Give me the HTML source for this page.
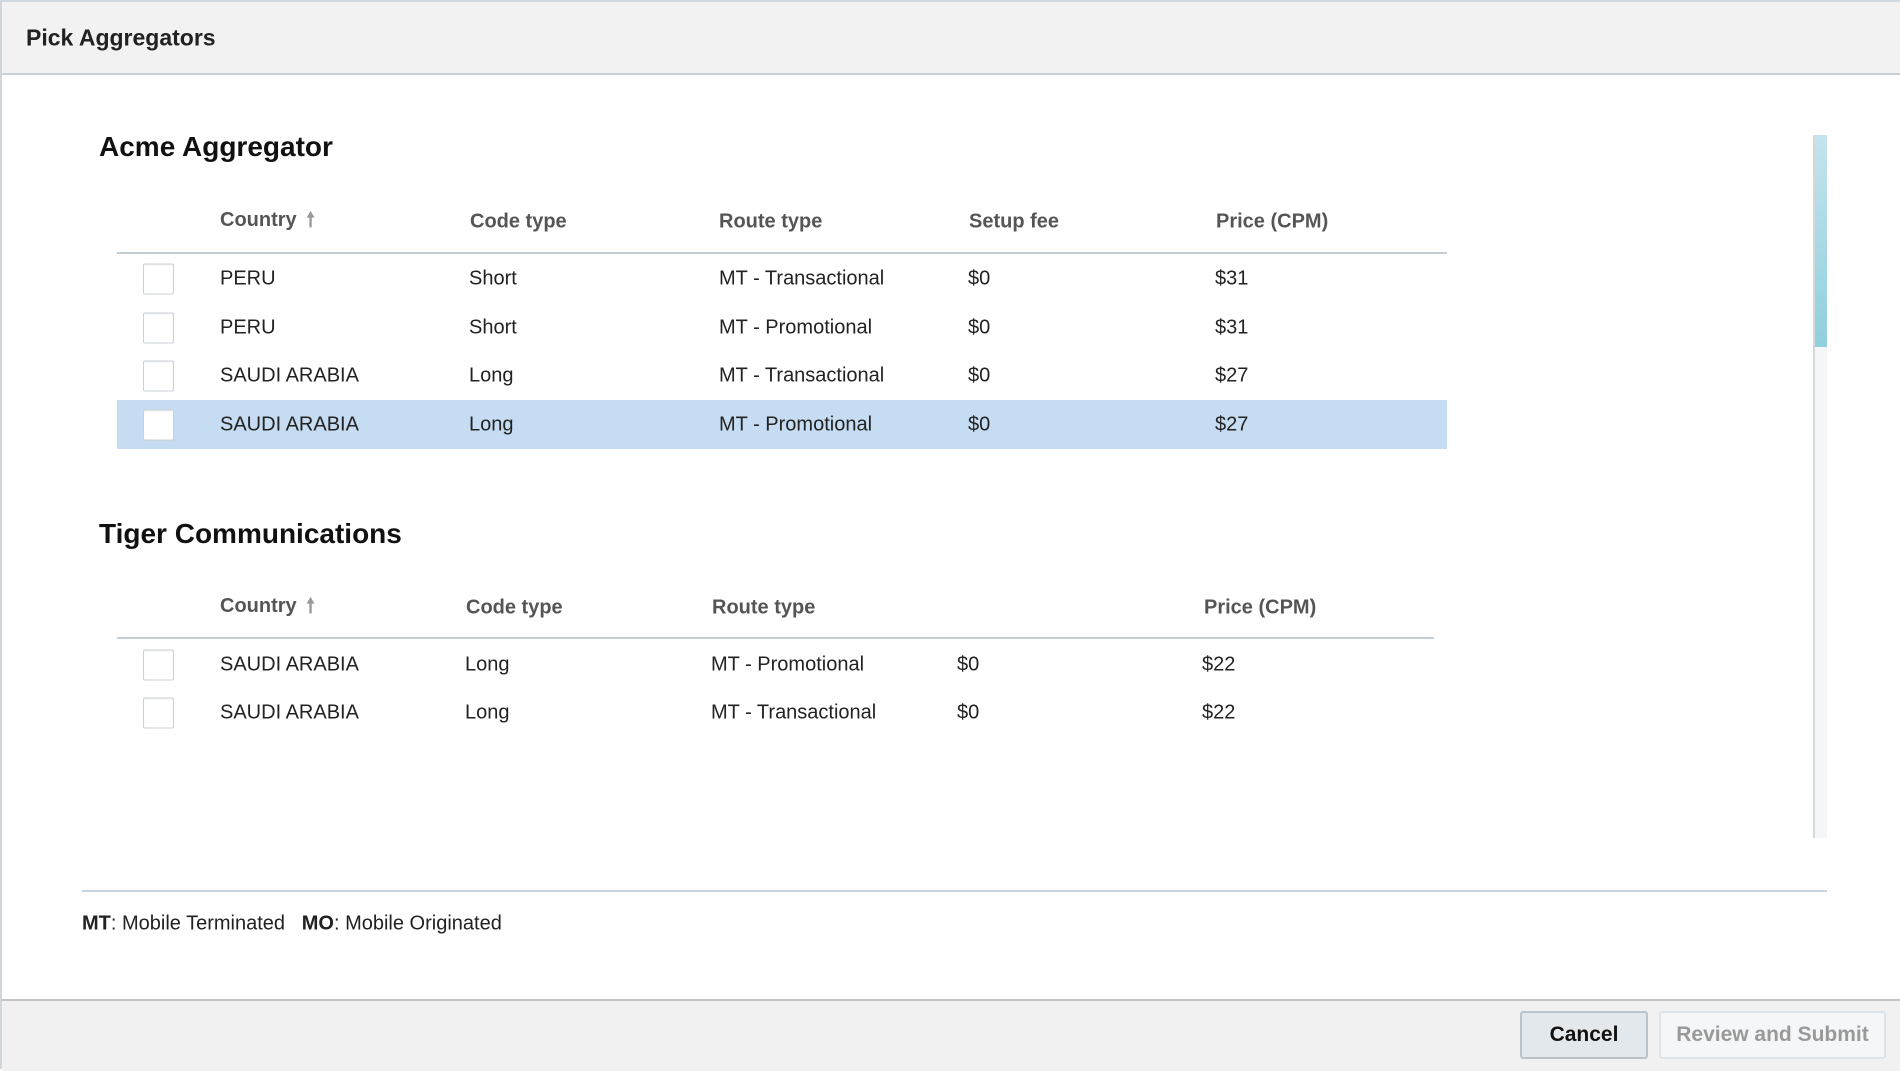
<!DOCTYPE html>
<html><head><style>
*{margin:0;padding:0;box-sizing:border-box}
body{width:1900px;height:1069px;position:relative;background:#fff;font-family:"Liberation Sans",Arial,sans-serif;color:#222;overflow:hidden;border-left:2px solid #d0d6dc;border-top:2px solid #d0d8e0}
.a{position:absolute;white-space:nowrap}
.hdr{position:absolute;left:0;top:0;width:1900px;height:73px;background:#f2f2f2;border-bottom:2px solid #c8cfd6}
.th{position:absolute;font-size:20px;font-weight:bold;color:#555;transform:translateY(-50%)}
.td{position:absolute;font-size:20px;color:#222;transform:translateY(-50%)}
.cb{position:absolute;width:31px;height:31px;border:1px solid #c9d0d6;background:#fff;border-radius:2px;transform:translateY(-50%);box-shadow:inset 0 1px 1px rgba(0,0,0,.05)}
.line{position:absolute;height:2px;background:#c4ccd4}
.arrow{display:inline-block;color:#999;font-size:20px;margin-left:4px}
</style></head><body>
<div class="hdr"></div>
<div class="a" style="left:24px;top:36px;transform:translateY(-50%);font-size:23px;font-weight:bold;color:#222">Pick Aggregators</div>

<div class="a" style="left:97px;top:145px;transform:translateY(-50%);font-size:28px;font-weight:bold;color:#111">Acme Aggregator</div>
<div class="th" style="left:218px;top:220px">Country <span class="arrow">🠕</span></div>
<div class="th" style="left:468px;top:220px">Code type</div>
<div class="th" style="left:717px;top:220px">Route type</div>
<div class="th" style="left:967px;top:220px">Setup fee</div>
<div class="th" style="left:1214px;top:220px">Price (CPM)</div>
<div class="line" style="left:115px;top:250px;width:1330px"></div>
<div style="position:absolute;left:115px;top:398px;width:1330px;height:49px;background:#c5dcf2"></div>

<div class="cb" style="left:141px;top:277px"></div><div class="td" style="left:218px;top:277px">PERU</div><div class="td" style="left:467px;top:277px">Short</div><div class="td" style="left:717px;top:277px">MT - Transactional</div><div class="td" style="left:966px;top:277px">$0</div><div class="td" style="left:1213px;top:277px">$31</div>
<div class="cb" style="left:141px;top:326px"></div><div class="td" style="left:218px;top:326px">PERU</div><div class="td" style="left:467px;top:326px">Short</div><div class="td" style="left:717px;top:326px">MT - Promotional</div><div class="td" style="left:966px;top:326px">$0</div><div class="td" style="left:1213px;top:326px">$31</div>
<div class="cb" style="left:141px;top:374px"></div><div class="td" style="left:218px;top:374px">SAUDI ARABIA</div><div class="td" style="left:467px;top:374px">Long</div><div class="td" style="left:717px;top:374px">MT - Transactional</div><div class="td" style="left:966px;top:374px">$0</div><div class="td" style="left:1213px;top:374px">$27</div>
<div class="cb" style="left:141px;top:423px"></div><div class="td" style="left:218px;top:423px">SAUDI ARABIA</div><div class="td" style="left:467px;top:423px">Long</div><div class="td" style="left:717px;top:423px">MT - Promotional</div><div class="td" style="left:966px;top:423px">$0</div><div class="td" style="left:1213px;top:423px">$27</div>

<div class="a" style="left:97px;top:532px;transform:translateY(-50%);font-size:28px;font-weight:bold;color:#111">Tiger Communications</div>
<div class="th" style="left:218px;top:606px">Country <span class="arrow">🠕</span></div>
<div class="th" style="left:464px;top:606px">Code type</div>
<div class="th" style="left:710px;top:606px">Route type</div>
<div class="th" style="left:1202px;top:606px">Price (CPM)</div>
<div class="line" style="left:115px;top:635px;width:1317px"></div>
<div class="cb" style="left:141px;top:663px"></div><div class="td" style="left:218px;top:663px">SAUDI ARABIA</div><div class="td" style="left:463px;top:663px">Long</div><div class="td" style="left:709px;top:663px">MT - Promotional</div><div class="td" style="left:955px;top:663px">$0</div><div class="td" style="left:1200px;top:663px">$22</div>
<div class="cb" style="left:141px;top:711px"></div><div class="td" style="left:218px;top:711px">SAUDI ARABIA</div><div class="td" style="left:463px;top:711px">Long</div><div class="td" style="left:709px;top:711px">MT - Transactional</div><div class="td" style="left:955px;top:711px">$0</div><div class="td" style="left:1200px;top:711px">$22</div>

<div style="position:absolute;left:1811px;top:133px;width:14px;height:703px;background:#f4f6f8;border-left:2px solid #d4d8dc"></div>
<div style="position:absolute;left:1813px;top:133px;width:12px;height:212px;background:linear-gradient(#c4e4ee,#8fd0dc)"></div>

<div class="line" style="left:80px;top:888px;width:1745px;background:#c8d4e0"></div>
<div class="a" style="left:80px;top:922px;transform:translateY(-50%);font-size:20px;color:#222"><b>MT</b>: Mobile Terminated &nbsp;&nbsp;<b>MO</b>: Mobile Originated</div>

<div style="position:absolute;left:0;top:997px;width:1900px;height:72px;background:#f1f1f1;border-top:2px solid #c4c4c4"></div>
<div class="a" style="left:1518px;top:1009px;width:128px;height:48px;border:2px solid #b9c4ce;border-radius:3px;background:#e3e8ec;font-size:21px;font-weight:bold;color:#111;display:flex;align-items:center;justify-content:center">Cancel</div>
<div class="a" style="left:1657px;top:1009px;width:227px;height:48px;border:2px solid #dce4ea;border-radius:3px;background:#f5f6f7;font-size:21px;font-weight:bold;color:#999;display:flex;align-items:center;justify-content:center">Review and Submit</div>
</body></html>
